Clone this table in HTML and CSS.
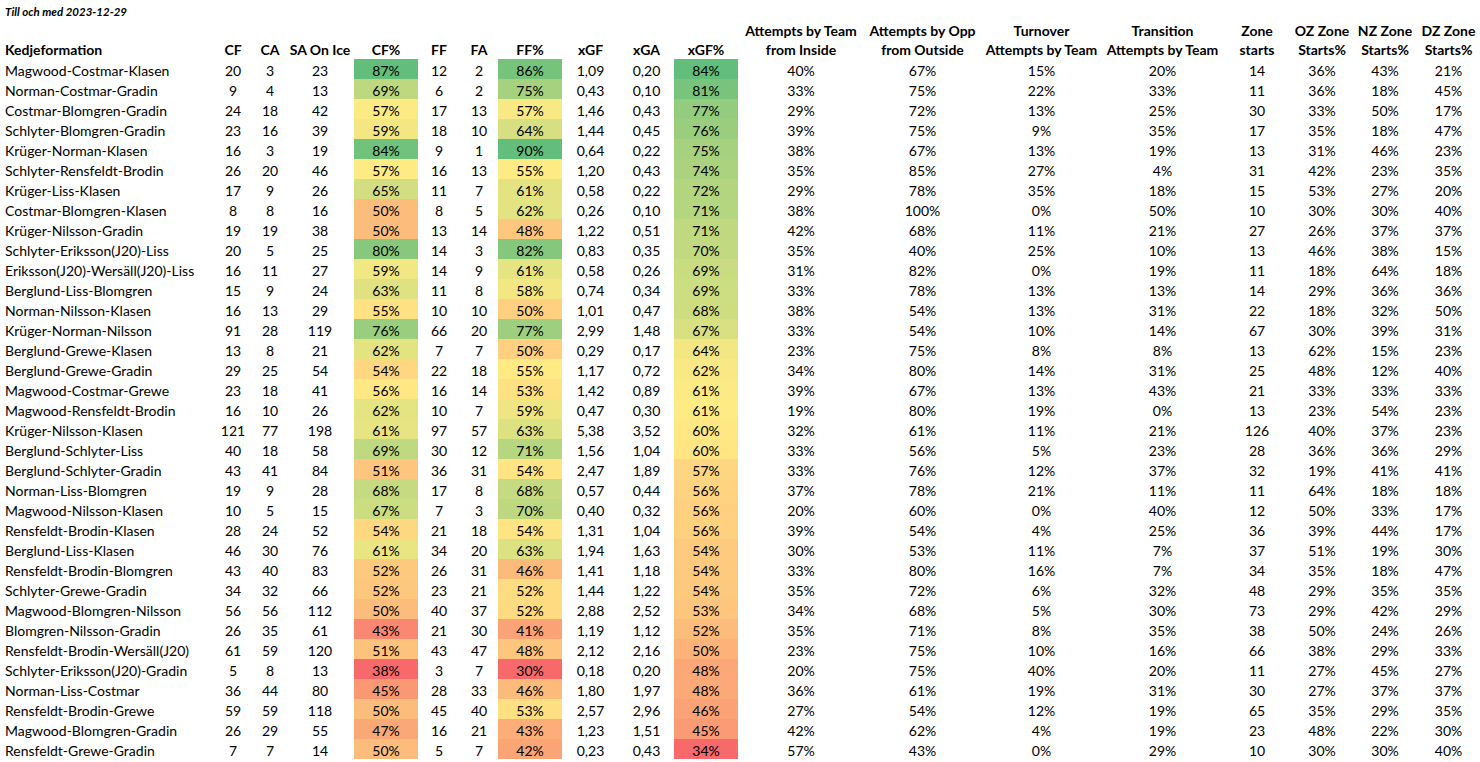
FILE: index.html
```html
<!DOCTYPE html>
<html lang="sv">
<head>
<meta charset="utf-8">
<title>Kedjeformation</title>
<link rel="stylesheet" href="styles.css">
</head>
<body>
<div class="sheet">
  <div class="title">Till och med 2023-12-29</div>
  <table class="grid">
    <colgroup>
      <col class="w-name"><col class="w-cf"><col class="w-ca"><col class="w-sa"><col class="w-pct">
      <col class="w-ff"><col class="w-fa"><col class="w-pct"><col class="w-xgf"><col class="w-xga"><col class="w-pct">
      <col class="w-a1"><col class="w-a2"><col class="w-a3"><col class="w-a4">
      <col class="w-zone"><col class="w-oz"><col class="w-nz"><col class="w-dz">
    </colgroup>
    <thead>
      <tr>
        <th class="nm">Kedjeformation</th>
        <th>CF</th><th>CA</th><th>SA On Ice</th><th>CF%</th>
        <th>FF</th><th>FA</th><th>FF%</th><th>xGF</th><th>xGA</th><th>xGF%</th>
        <th>Attempts by Team<br>from Inside</th>
        <th>Attempts by Opp<br>from Outside</th>
        <th>Turnover<br>Attempts by Team</th>
        <th>Transition<br>Attempts by Team</th>
        <th>Zone<br>starts</th>
        <th>OZ Zone<br>Starts%</th>
        <th>NZ Zone<br>Starts%</th>
        <th>DZ Zone<br>Starts%</th>
      </tr>
    </thead>
    <tbody>
      <tr><td class="nm">Magwood-Costmar-Klasen</td><td>20</td><td>3</td><td>23</td><td class="cs">87%</td><td>12</td><td>2</td><td class="cs">86%</td><td>1,09</td><td>0,20</td><td class="cs">84%</td><td>40%</td><td>67%</td><td>15%</td><td>20%</td><td>14</td><td>36%</td><td>43%</td><td>21%</td></tr>
      <tr><td class="nm">Norman-Costmar-Gradin</td><td>9</td><td>4</td><td>13</td><td class="cs">69%</td><td>6</td><td>2</td><td class="cs">75%</td><td>0,43</td><td>0,10</td><td class="cs">81%</td><td>33%</td><td>75%</td><td>22%</td><td>33%</td><td>11</td><td>36%</td><td>18%</td><td>45%</td></tr>
      <tr><td class="nm">Costmar-Blomgren-Gradin</td><td>24</td><td>18</td><td>42</td><td class="cs">57%</td><td>17</td><td>13</td><td class="cs">57%</td><td>1,46</td><td>0,43</td><td class="cs">77%</td><td>29%</td><td>72%</td><td>13%</td><td>25%</td><td>30</td><td>33%</td><td>50%</td><td>17%</td></tr>
      <tr><td class="nm">Schlyter-Blomgren-Gradin</td><td>23</td><td>16</td><td>39</td><td class="cs">59%</td><td>18</td><td>10</td><td class="cs">64%</td><td>1,44</td><td>0,45</td><td class="cs">76%</td><td>39%</td><td>75%</td><td>9%</td><td>35%</td><td>17</td><td>35%</td><td>18%</td><td>47%</td></tr>
      <tr><td class="nm">Krüger-Norman-Klasen</td><td>16</td><td>3</td><td>19</td><td class="cs">84%</td><td>9</td><td>1</td><td class="cs">90%</td><td>0,64</td><td>0,22</td><td class="cs">75%</td><td>38%</td><td>67%</td><td>13%</td><td>19%</td><td>13</td><td>31%</td><td>46%</td><td>23%</td></tr>
      <tr><td class="nm">Schlyter-Rensfeldt-Brodin</td><td>26</td><td>20</td><td>46</td><td class="cs">57%</td><td>16</td><td>13</td><td class="cs">55%</td><td>1,20</td><td>0,43</td><td class="cs">74%</td><td>35%</td><td>85%</td><td>27%</td><td>4%</td><td>31</td><td>42%</td><td>23%</td><td>35%</td></tr>
      <tr><td class="nm">Krüger-Liss-Klasen</td><td>17</td><td>9</td><td>26</td><td class="cs">65%</td><td>11</td><td>7</td><td class="cs">61%</td><td>0,58</td><td>0,22</td><td class="cs">72%</td><td>29%</td><td>78%</td><td>35%</td><td>18%</td><td>15</td><td>53%</td><td>27%</td><td>20%</td></tr>
      <tr><td class="nm">Costmar-Blomgren-Klasen</td><td>8</td><td>8</td><td>16</td><td class="cs">50%</td><td>8</td><td>5</td><td class="cs">62%</td><td>0,26</td><td>0,10</td><td class="cs">71%</td><td>38%</td><td>100%</td><td>0%</td><td>50%</td><td>10</td><td>30%</td><td>30%</td><td>40%</td></tr>
      <tr><td class="nm">Krüger-Nilsson-Gradin</td><td>19</td><td>19</td><td>38</td><td class="cs">50%</td><td>13</td><td>14</td><td class="cs">48%</td><td>1,22</td><td>0,51</td><td class="cs">71%</td><td>42%</td><td>68%</td><td>11%</td><td>21%</td><td>27</td><td>26%</td><td>37%</td><td>37%</td></tr>
      <tr><td class="nm">Schlyter-Eriksson(J20)-Liss</td><td>20</td><td>5</td><td>25</td><td class="cs">80%</td><td>14</td><td>3</td><td class="cs">82%</td><td>0,83</td><td>0,35</td><td class="cs">70%</td><td>35%</td><td>40%</td><td>25%</td><td>10%</td><td>13</td><td>46%</td><td>38%</td><td>15%</td></tr>
      <tr><td class="nm">Eriksson(J20)-Wersäll(J20)-Liss</td><td>16</td><td>11</td><td>27</td><td class="cs">59%</td><td>14</td><td>9</td><td class="cs">61%</td><td>0,58</td><td>0,26</td><td class="cs">69%</td><td>31%</td><td>82%</td><td>0%</td><td>19%</td><td>11</td><td>18%</td><td>64%</td><td>18%</td></tr>
      <tr><td class="nm">Berglund-Liss-Blomgren</td><td>15</td><td>9</td><td>24</td><td class="cs">63%</td><td>11</td><td>8</td><td class="cs">58%</td><td>0,74</td><td>0,34</td><td class="cs">69%</td><td>33%</td><td>78%</td><td>13%</td><td>13%</td><td>14</td><td>29%</td><td>36%</td><td>36%</td></tr>
      <tr><td class="nm">Norman-Nilsson-Klasen</td><td>16</td><td>13</td><td>29</td><td class="cs">55%</td><td>10</td><td>10</td><td class="cs">50%</td><td>1,01</td><td>0,47</td><td class="cs">68%</td><td>38%</td><td>54%</td><td>13%</td><td>31%</td><td>22</td><td>18%</td><td>32%</td><td>50%</td></tr>
      <tr><td class="nm">Krüger-Norman-Nilsson</td><td>91</td><td>28</td><td>119</td><td class="cs">76%</td><td>66</td><td>20</td><td class="cs">77%</td><td>2,99</td><td>1,48</td><td class="cs">67%</td><td>33%</td><td>54%</td><td>10%</td><td>14%</td><td>67</td><td>30%</td><td>39%</td><td>31%</td></tr>
      <tr><td class="nm">Berglund-Grewe-Klasen</td><td>13</td><td>8</td><td>21</td><td class="cs">62%</td><td>7</td><td>7</td><td class="cs">50%</td><td>0,29</td><td>0,17</td><td class="cs">64%</td><td>23%</td><td>75%</td><td>8%</td><td>8%</td><td>13</td><td>62%</td><td>15%</td><td>23%</td></tr>
      <tr><td class="nm">Berglund-Grewe-Gradin</td><td>29</td><td>25</td><td>54</td><td class="cs">54%</td><td>22</td><td>18</td><td class="cs">55%</td><td>1,17</td><td>0,72</td><td class="cs">62%</td><td>34%</td><td>80%</td><td>14%</td><td>31%</td><td>25</td><td>48%</td><td>12%</td><td>40%</td></tr>
      <tr><td class="nm">Magwood-Costmar-Grewe</td><td>23</td><td>18</td><td>41</td><td class="cs">56%</td><td>16</td><td>14</td><td class="cs">53%</td><td>1,42</td><td>0,89</td><td class="cs">61%</td><td>39%</td><td>67%</td><td>13%</td><td>43%</td><td>21</td><td>33%</td><td>33%</td><td>33%</td></tr>
      <tr><td class="nm">Magwood-Rensfeldt-Brodin</td><td>16</td><td>10</td><td>26</td><td class="cs">62%</td><td>10</td><td>7</td><td class="cs">59%</td><td>0,47</td><td>0,30</td><td class="cs">61%</td><td>19%</td><td>80%</td><td>19%</td><td>0%</td><td>13</td><td>23%</td><td>54%</td><td>23%</td></tr>
      <tr><td class="nm">Krüger-Nilsson-Klasen</td><td>121</td><td>77</td><td>198</td><td class="cs">61%</td><td>97</td><td>57</td><td class="cs">63%</td><td>5,38</td><td>3,52</td><td class="cs">60%</td><td>32%</td><td>61%</td><td>11%</td><td>21%</td><td>126</td><td>40%</td><td>37%</td><td>23%</td></tr>
      <tr><td class="nm">Berglund-Schlyter-Liss</td><td>40</td><td>18</td><td>58</td><td class="cs">69%</td><td>30</td><td>12</td><td class="cs">71%</td><td>1,56</td><td>1,04</td><td class="cs">60%</td><td>33%</td><td>56%</td><td>5%</td><td>23%</td><td>28</td><td>36%</td><td>36%</td><td>29%</td></tr>
      <tr><td class="nm">Berglund-Schlyter-Gradin</td><td>43</td><td>41</td><td>84</td><td class="cs">51%</td><td>36</td><td>31</td><td class="cs">54%</td><td>2,47</td><td>1,89</td><td class="cs">57%</td><td>33%</td><td>76%</td><td>12%</td><td>37%</td><td>32</td><td>19%</td><td>41%</td><td>41%</td></tr>
      <tr><td class="nm">Norman-Liss-Blomgren</td><td>19</td><td>9</td><td>28</td><td class="cs">68%</td><td>17</td><td>8</td><td class="cs">68%</td><td>0,57</td><td>0,44</td><td class="cs">56%</td><td>37%</td><td>78%</td><td>21%</td><td>11%</td><td>11</td><td>64%</td><td>18%</td><td>18%</td></tr>
      <tr><td class="nm">Magwood-Nilsson-Klasen</td><td>10</td><td>5</td><td>15</td><td class="cs">67%</td><td>7</td><td>3</td><td class="cs">70%</td><td>0,40</td><td>0,32</td><td class="cs">56%</td><td>20%</td><td>60%</td><td>0%</td><td>40%</td><td>12</td><td>50%</td><td>33%</td><td>17%</td></tr>
      <tr><td class="nm">Rensfeldt-Brodin-Klasen</td><td>28</td><td>24</td><td>52</td><td class="cs">54%</td><td>21</td><td>18</td><td class="cs">54%</td><td>1,31</td><td>1,04</td><td class="cs">56%</td><td>39%</td><td>54%</td><td>4%</td><td>25%</td><td>36</td><td>39%</td><td>44%</td><td>17%</td></tr>
      <tr><td class="nm">Berglund-Liss-Klasen</td><td>46</td><td>30</td><td>76</td><td class="cs">61%</td><td>34</td><td>20</td><td class="cs">63%</td><td>1,94</td><td>1,63</td><td class="cs">54%</td><td>30%</td><td>53%</td><td>11%</td><td>7%</td><td>37</td><td>51%</td><td>19%</td><td>30%</td></tr>
      <tr><td class="nm">Rensfeldt-Brodin-Blomgren</td><td>43</td><td>40</td><td>83</td><td class="cs">52%</td><td>26</td><td>31</td><td class="cs">46%</td><td>1,41</td><td>1,18</td><td class="cs">54%</td><td>33%</td><td>80%</td><td>16%</td><td>7%</td><td>34</td><td>35%</td><td>18%</td><td>47%</td></tr>
      <tr><td class="nm">Schlyter-Grewe-Gradin</td><td>34</td><td>32</td><td>66</td><td class="cs">52%</td><td>23</td><td>21</td><td class="cs">52%</td><td>1,44</td><td>1,22</td><td class="cs">54%</td><td>35%</td><td>72%</td><td>6%</td><td>32%</td><td>48</td><td>29%</td><td>35%</td><td>35%</td></tr>
      <tr><td class="nm">Magwood-Blomgren-Nilsson</td><td>56</td><td>56</td><td>112</td><td class="cs">50%</td><td>40</td><td>37</td><td class="cs">52%</td><td>2,88</td><td>2,52</td><td class="cs">53%</td><td>34%</td><td>68%</td><td>5%</td><td>30%</td><td>73</td><td>29%</td><td>42%</td><td>29%</td></tr>
      <tr><td class="nm">Blomgren-Nilsson-Gradin</td><td>26</td><td>35</td><td>61</td><td class="cs">43%</td><td>21</td><td>30</td><td class="cs">41%</td><td>1,19</td><td>1,12</td><td class="cs">52%</td><td>35%</td><td>71%</td><td>8%</td><td>35%</td><td>38</td><td>50%</td><td>24%</td><td>26%</td></tr>
      <tr><td class="nm">Rensfeldt-Brodin-Wersäll(J20)</td><td>61</td><td>59</td><td>120</td><td class="cs">51%</td><td>43</td><td>47</td><td class="cs">48%</td><td>2,12</td><td>2,16</td><td class="cs">50%</td><td>23%</td><td>75%</td><td>10%</td><td>16%</td><td>66</td><td>38%</td><td>29%</td><td>33%</td></tr>
      <tr><td class="nm">Schlyter-Eriksson(J20)-Gradin</td><td>5</td><td>8</td><td>13</td><td class="cs">38%</td><td>3</td><td>7</td><td class="cs">30%</td><td>0,18</td><td>0,20</td><td class="cs">48%</td><td>20%</td><td>75%</td><td>40%</td><td>20%</td><td>11</td><td>27%</td><td>45%</td><td>27%</td></tr>
      <tr><td class="nm">Norman-Liss-Costmar</td><td>36</td><td>44</td><td>80</td><td class="cs">45%</td><td>28</td><td>33</td><td class="cs">46%</td><td>1,80</td><td>1,97</td><td class="cs">48%</td><td>36%</td><td>61%</td><td>19%</td><td>31%</td><td>30</td><td>27%</td><td>37%</td><td>37%</td></tr>
      <tr><td class="nm">Rensfeldt-Brodin-Grewe</td><td>59</td><td>59</td><td>118</td><td class="cs">50%</td><td>45</td><td>40</td><td class="cs">53%</td><td>2,57</td><td>2,96</td><td class="cs">46%</td><td>27%</td><td>54%</td><td>12%</td><td>19%</td><td>65</td><td>35%</td><td>29%</td><td>35%</td></tr>
      <tr><td class="nm">Magwood-Blomgren-Gradin</td><td>26</td><td>29</td><td>55</td><td class="cs">47%</td><td>16</td><td>21</td><td class="cs">43%</td><td>1,23</td><td>1,51</td><td class="cs">45%</td><td>42%</td><td>62%</td><td>4%</td><td>19%</td><td>23</td><td>48%</td><td>22%</td><td>30%</td></tr>
      <tr><td class="nm">Rensfeldt-Grewe-Gradin</td><td>7</td><td>7</td><td>14</td><td class="cs">50%</td><td>5</td><td>7</td><td class="cs">42%</td><td>0,23</td><td>0,43</td><td class="cs">34%</td><td>57%</td><td>43%</td><td>0%</td><td>29%</td><td>10</td><td>30%</td><td>30%</td><td>40%</td></tr>
    </tbody>
  </table>
</div>
<script src="script.js"></script>
</body>
</html>
```
FILE: styles.css
```css
html, body {
  margin: 0;
  padding: 0;
  background: #ffffff;
  overflow: hidden;
}

.sheet {
  width: 1480px;
  font-family: Lato, "Liberation Sans", sans-serif;
  font-size: 14px;
  color: #000000;
}

.title {
  height: 19px;
  box-sizing: border-box;
  padding: 4px 0 0 5px;
  font-size: 11.5px;
  line-height: 15px;
  font-weight: 700;
  font-style: italic;
}

.grid {
  width: 1480px;
  table-layout: fixed;
  border-collapse: collapse;
  border-spacing: 0;
}

.grid th,
.grid td {
  box-sizing: border-box;
  padding: 0;
  text-align: center;
  white-space: nowrap;
  overflow: visible;
}

.grid th {
  height: 40px;
  padding-top: 2px;
  line-height: 19px;
  font-weight: 700;
  vertical-align: bottom;
}

.grid td {
  height: 20px;
  padding-top: 3px;
  line-height: 17px;
  vertical-align: top;
}

.grid .nm {
  text-align: left;
  padding-left: 5px;
}

.w-name { width: 212px; }
.w-cf { width: 42px; }
.w-ca { width: 32px; }
.w-sa { width: 68px; }
.w-pct { width: 64px; }
.w-ff { width: 42px; }
.w-fa { width: 38px; }
.w-xgf { width: 57px; }
.w-xga { width: 55px; }
.w-a1 { width: 126px; }
.w-a2 { width: 117px; }
.w-a3 { width: 121px; }
.w-a4 { width: 121px; }
.w-zone { width: 68px; }
.w-oz { width: 62px; }
.w-nz { width: 64px; }
.w-dz { width: 63px; }
```
FILE: script.js
```js
(function () {
  var RED = [248, 105, 107];
  var YEL = [255, 235, 132];
  var GRN = [99, 190, 123];
  var rows = Array.prototype.slice.call(document.querySelectorAll('.grid tbody tr'));
  function num(s) { return parseFloat(s.replace(',', '.')); }
  function mix(a, b, t) {
    return a.map(function (x, j) { return Math.round(x + (b[j] - x) * t); });
  }
  // [for-column, against-column, percent-column]
  var groups = [[1, 2, 4], [5, 6, 7], [8, 9, 10]];
  groups.forEach(function (g) {
    var vals = rows.map(function (r) {
      var f = num(r.cells[g[0]].textContent);
      var a = num(r.cells[g[1]].textContent);
      return f / (f + a);
    });
    var s = vals.slice().sort(function (p, q) { return p - q; });
    var n = s.length;
    var min = s[0], max = s[n - 1];
    var k = 0.5 * (n - 1), lo = Math.floor(k);
    var mid = s[lo] + (k - lo) * ((lo + 1 < n ? s[lo + 1] : s[lo]) - s[lo]);
    rows.forEach(function (r, i) {
      var v = vals[i], col;
      if (v <= mid) {
        col = mix(RED, YEL, mid === min ? 1 : (v - min) / (mid - min));
      } else {
        col = mix(YEL, GRN, (v - mid) / (max - mid));
      }
      r.cells[g[2]].style.background = 'rgb(' + col.join(',') + ')';
    });
  });
})();
```
